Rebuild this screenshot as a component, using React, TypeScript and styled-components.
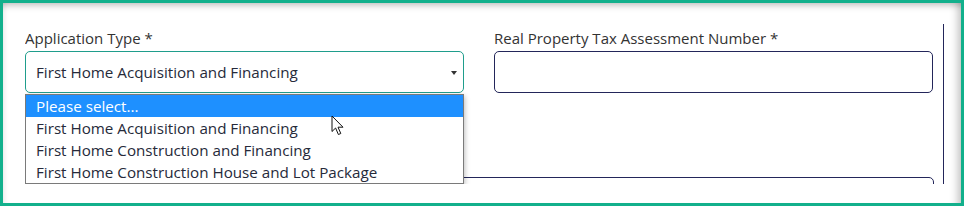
import React from 'react';
import styled, { createGlobalStyle } from 'styled-components';

const GlobalStyle = createGlobalStyle`
  html, body {
    margin: 0;
    padding: 0;
    background: #ffffff;
  }
  * {
    box-sizing: border-box;
  }
`;

const options = [
  'Please select...',
  'First Home Acquisition and Financing',
  'First Home Construction and Financing',
  'First Home Construction House and Lot Package',
];

const App: React.FC = () => {
  return (
    <>
      <GlobalStyle />
      <Frame>
        <Panel>
          <Row>
            <Field>
              <Label>Application Type *</Label>
              <SelectWrap>
                <SelectBox>
                  <SelectValue>First Home Acquisition and Financing</SelectValue>
                  <Caret />
                </SelectBox>
                <OptionList>
                  {options.map((opt, i) => (
                    <OptionItem key={opt} $active={i === 0}>
                      {opt}
                    </OptionItem>
                  ))}
                  <Pointer viewBox="0 0 14 22" width="14" height="22">
                    <path
                      d="M1 1 L1 16.5 L4.6 13 L7.4 19.5 L9.8 18.5 L7 12.2 L12 12.2 Z"
                      fill="#ffffff"
                      stroke="#111111"
                      strokeWidth="1"
                      strokeLinejoin="miter"
                    />
                  </Pointer>
                </OptionList>
              </SelectWrap>
            </Field>
            <Field>
              <Label>Real Property Tax Assessment Number *</Label>
              <TextBox />
            </Field>
          </Row>
          <WideBox />
        </Panel>
      </Frame>
    </>
  );
};

const Frame = styled.div`
  width: 964px;
  height: 206px;
  border: 3px solid #12b08c;
  background: #ffffff;
  padding: 21px 0 0 22px;
  box-shadow: inset 0 9px 7px -7px rgba(0, 0, 0, 0.28), inset -11px 0 8px -8px rgba(0, 0, 0, 0.25),
    inset 6px 0 6px -6px rgba(0, 0, 0, 0.14);
`;

const Panel = styled.div`
  width: 919px;
  height: 160px;
  border-right: 1px solid #23265a;
  padding: 4px 10px 0 0;
  overflow: hidden;
  font-family: 'Open Sans', 'Noto Sans', sans-serif;
`;

const Row = styled.div`
  display: grid;
  grid-template-columns: 439px 439px;
  column-gap: 30px;
`;

const Field = styled.div`
  display: flex;
  flex-direction: column;
`;

const Label = styled.div`
  font-size: 15px;
  line-height: 21px;
  color: #333333;
  margin-bottom: 2px;
`;

const SelectWrap = styled.div`
  position: relative;
`;

const SelectBox = styled.div`
  height: 42px;
  border: 1px solid #1f9d8c;
  border-radius: 5px;
  display: flex;
  align-items: center;
  justify-content: space-between;
  padding: 0 6px 0 10px;
  background: #ffffff;
`;

const SelectValue = styled.span`
  font-size: 15.2px;
  color: #262a3a;
`;

const Caret = styled.span`
  width: 0;
  height: 0;
  border-left: 3.5px solid transparent;
  border-right: 3.5px solid transparent;
  border-top: 4px solid #333333;
  margin-top: 1px;
`;

const OptionList = styled.div`
  position: absolute;
  top: 43px;
  left: 0;
  width: 439px;
  border: 1px solid #7a7a7a;
  background: #ffffff;
  box-shadow: 1px 2px 5px rgba(0, 0, 0, 0.25);
  z-index: 2;
`;

const OptionItem = styled.div<{ $active: boolean }>`
  height: 22px;
  line-height: 22px;
  padding-left: 10px;
  font-size: 15.2px;
  white-space: nowrap;
  background: ${({ $active }) => ($active ? '#1e90ff' : '#ffffff')};
  color: ${({ $active }) => ($active ? '#ffffff' : '#262a3a')};
`;

const Pointer = styled.svg`
  position: absolute;
  left: 305px;
  top: 20px;
`;

const TextBox = styled.div`
  height: 42px;
  border: 1px solid #23265a;
  border-radius: 5px;
`;

const WideBox = styled.div`
  margin-top: 84px;
  width: 909px;
  height: 42px;
  border: 1px solid #23265a;
  border-radius: 5px;
`;

export default App;
